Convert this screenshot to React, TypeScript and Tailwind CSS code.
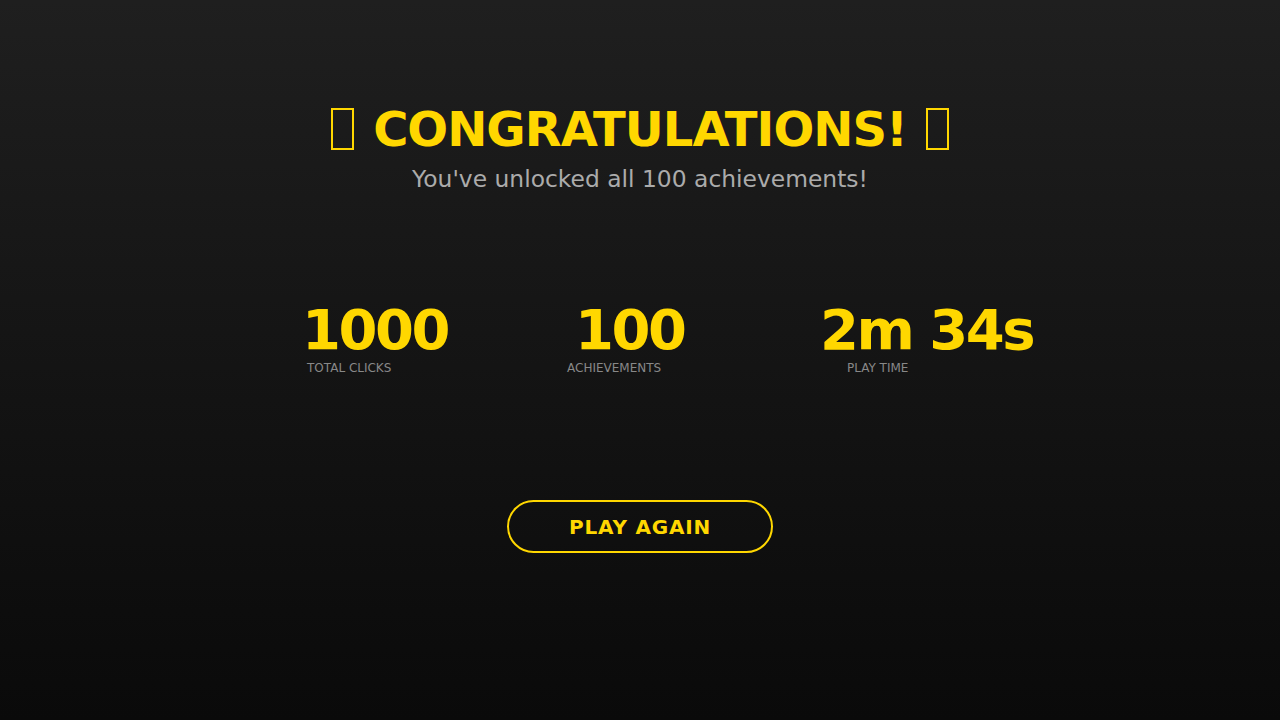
import React from "react";

const stats = [
  { value: "1000", label: "Total Clicks", w: "w-[273px]", lab: "ml-[5px]" },
  { value: "100", label: "Achievements", w: "w-[245px]", lab: "ml-[-8px]" },
  { value: "2m 34s", label: "Play Time", w: "w-[240px]", lab: "ml-[27px]" },
];

// Placeholder glyph box drawn on each side of the heading
function GlyphBox() {
  return <span className="inline-block w-[23px] h-[42px] border-2 border-[#FFD700]" />;
}

export default function App() {
  return (
    <div
      className="h-[720px] w-full bg-gradient-to-b from-[#1f1f1f] to-[#0a0a0a] flex flex-col items-center"
      style={{ fontFamily: '"DejaVu Sans", sans-serif' }}
    >
      <h1 className="mt-[97px] h-[64px] flex items-center gap-[19px] text-[48px] leading-[64px] font-bold tracking-[-1px] text-[#FFD700]">
        <GlyphBox />
        <span>CONGRATULATIONS!</span>
        <GlyphBox />
      </h1>
      <p className="mt-[3px] text-[23.4px] leading-[30px] text-[#ababab]">
        You've unlocked all 100 achievements!
      </p>

      <div className="mt-[108px] w-full flex pl-[302px]">
        {stats.map((s) => (
          <div key={s.label} className={`${s.w} flex flex-col items-start`}>
            <div className="text-[56px] leading-[56px] font-bold tracking-[-2.5px] text-[#FFD700] whitespace-nowrap">
              {s.value}
            </div>
            <div className={`${s.lab} mt-[3px] text-[12px] leading-[14px] uppercase text-[#888888]`}>
              {s.label}
            </div>
          </div>
        ))}
      </div>

      <button className="mt-[125px] w-[266px] h-[53px] rounded-full border-2 border-[#FFD700] text-[#FFD700] text-[20px] font-bold tracking-[0.8px]">
        PLAY AGAIN
      </button>
    </div>
  );
}
